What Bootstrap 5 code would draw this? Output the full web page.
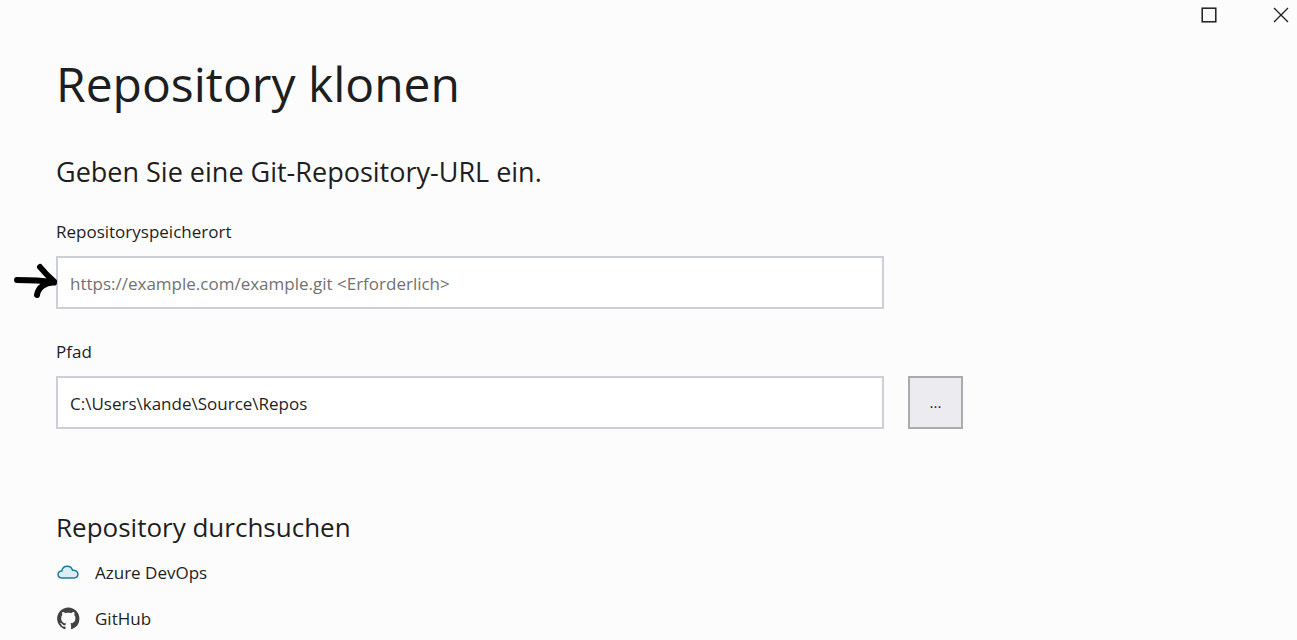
<!DOCTYPE html>
<html lang="de">
<head>
<meta charset="utf-8">
<meta name="viewport" content="width=device-width, initial-scale=1">
<title>Repository klonen</title>
<link href="https://cdn.jsdelivr.net/npm/bootstrap@5.3.0/dist/css/bootstrap.min.css" rel="stylesheet">
<style>
  body { background: #fcfcfc; color: #1e1e1e; font-family: "Segoe UI", "Open Sans", "Noto Sans", sans-serif; font-size: 17px; line-height: 24px; }
  .window-bar { height: 32px; }
  .window-btn { width: 32px; height: 30px; color: #1e1e1e; }
  .window-btn svg, .source-link svg { display: block; }
  .content { padding: 22px 56px 8px; }
  .page-title { font-size: 48px; line-height: 60px; font-weight: 400; margin-bottom: 42px; }
  .intro { font-size: 27px; line-height: 32px; font-weight: 400; margin-bottom: 32px; }
  .section-title { font-size: 26px; line-height: 32px; font-weight: 400; margin-bottom: 18px; }
  .clone-form { max-width: 907px; display: grid; grid-template-columns: minmax(0, 1fr) 55px; column-gap: 24px; margin-bottom: 82px; }
  .clone-form label { grid-column: 1 / -1; margin-bottom: 12px; }
  .clone-form .form-control { height: 53px; padding: 2px 12px 0; border: 2px solid #ccced8; color: #1e1e1e; font-size: 17px; line-height: 24px; background: #fff; }
  .clone-form .form-control::placeholder { color: #717171; opacity: 1; }
  .browse-btn { height: 53px; border: 2px solid #ababad; background: #ececf0; color: #1e1e1e; font-size: 15px; }
  .field-wrap { grid-column: 1; margin-bottom: 31px; }
  .pointer { left: -43px; top: 6px; }
  .source-link { color: #1e1e1e; gap: 15px; }
  .source-list { gap: 22px; }
</style>
</head>
<body>
<header class="window-bar d-flex justify-content-end">
  <button type="button" class="btn window-btn border-0 rounded-0 p-0 me-4 d-flex align-items-center justify-content-center" aria-label="Maximieren">
    <svg width="16" height="16" viewBox="0 0 16 16" fill="none" stroke="currentColor" stroke-width="1.5"><rect x="1.2" y="1.2" width="13.600" height="13.600"/></svg>
  </button>
  <button type="button" class="btn window-btn border-0 rounded-0 p-0 ms-3 d-flex align-items-center justify-content-center" aria-label="Schließen">
    <svg width="16" height="16" viewBox="0 0 16 16" fill="none" stroke="currentColor" stroke-width="1.3"><path d="M1 1l14 14M15 1L1 15"/></svg>
  </button>
</header>
<main class="content">
  <h1 class="page-title">Repository klonen</h1>
  <h2 class="intro">Geben Sie eine Git-Repository-URL ein.</h2>
  <form class="clone-form">
    <label for="repo-url">Repositoryspeicherort</label>
    <div class="field-wrap position-relative">
      <input type="url" id="repo-url" class="form-control rounded-0" placeholder="https://example.com/example.git &lt;Erforderlich&gt;">
      <svg class="pointer position-absolute" width="46" height="38" viewBox="0 0 46 38" fill="none" stroke="#000" stroke-width="6" stroke-linecap="round" stroke-linejoin="round" aria-hidden="true"><path d="M4 18C15 18 27 18 38 20M27 5C31 10 36 15 41 19.500M41 20.500C32 20 25 26 24 33"/></svg>
    </div>
    <label for="path">Pfad</label>
    <input type="text" id="path" class="form-control rounded-0" value="C:\Users\kande\Source\Repos">
    <button type="button" class="btn browse-btn rounded-0 p-0" aria-label="Durchsuchen">...</button>
  </form>
  <section>
    <h2 class="section-title">Repository durchsuchen</h2>
    <nav class="source-list d-flex flex-column align-items-start">
      <a href="#" class="source-link d-flex align-items-center text-decoration-none">
        <svg width="24" height="24" viewBox="0 0 24 24"><path d="M6 17C3.900 17 2.100 15.600 2.100 13.500C2.100 11.300 3.700 10.100 5.800 10C6.300 7.200 8.400 5.300 11.200 5.300C13.700 5.300 15.800 6.900 16.500 9.200C19.600 8.900 21.900 10.500 21.900 13.100C21.900 15.500 20.200 17 18 17Z" fill="#dcecf3" stroke="#23799b" stroke-width="1.500" stroke-linejoin="round"/></svg>
        Azure DevOps
      </a>
      <a href="#" class="source-link d-flex align-items-center text-decoration-none">
        <svg width="24" height="24" viewBox="-.8 -.3 17.200 17.200" fill="#424242"><path d="M8 0C3.580 0 0 3.580 0 8c0 3.540 2.290 6.530 5.470 7.590.4.070.55-.17.55-.38 0-.19-.01-.82-.01-1.490-2.010.37-2.530-.49-2.690-.94-.09-.23-.48-.94-.82-1.130-.28-.15-.68-.52-.01-.53.63-.01 1.080.58 1.230.82.72 1.210 1.870.87 2.330.66.07-.52.28-.87.51-1.070-1.780-.2-3.640-.89-3.640-3.950 0-.87.31-1.590.82-2.150-.08-.2-.36-1.020.08-2.120 0 0 .67-.21 2.200.82.64-.18 1.320-.27 2-.27s1.360.09 2 .27c1.530-1.040 2.200-.82 2.200-.82.44 1.100.16 1.920.08 2.120.51.56.82 1.270.82 2.150 0 3.070-1.870 3.750-3.650 3.950.29.25.54.73.54 1.480 0 1.070-.01 1.930-.01 2.200 0 .21.15.46.55.38A8 8 0 0 0 16 8c0-4.420-3.580-8-8-8"/></svg>
        GitHub
      </a>
    </nav>
  </section>
</main>
<script src="https://cdn.jsdelivr.net/npm/bootstrap@5.3.0/dist/js/bootstrap.bundle.min.js"></script>
</body>
</html>
